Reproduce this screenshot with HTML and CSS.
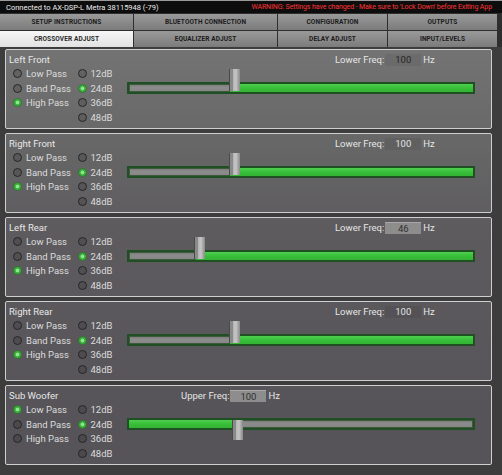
FILE: index.html
```html
<!DOCTYPE html>
<html>
<head>
<meta charset="utf-8">
<link rel="stylesheet" href="styles.css">
</head>
<body>
<div class="app">
  <div class="status">
    <span class="conn">Connected to AX-DSP-L Metra 38115948 (-79)</span>
    <span class="warn">WARNING: Settings have changed - Make sure to 'Lock Down' before Exiting App</span>
  </div>
  <div class="tabs">
    <div class="tab">SETUP INSTRUCTIONS</div>
    <div class="tab">BLUETOOTH CONNECTION</div>
    <div class="tab">CONFIGURATION</div>
    <div class="tab">OUTPUTS</div>
  </div>
  <div class="tabs">
    <div class="tab active">CROSSOVER ADJUST</div>
    <div class="tab">EQUALIZER ADJUST</div>
    <div class="tab">DELAY ADJUST</div>
    <div class="tab">INPUT/LEVELS</div>
  </div>

  <div class="content">
    <section class="panel">
      <div class="head lower">
        <span class="title">Left Front</span>
        <span class="freq"><span class="flabel">Lower Freq:</span><span class="fbox">100</span><span class="hz">Hz</span></span>
      </div>
      <div class="body">
        <div class="group types">
          <div class="opt"><span class="radio"></span>Low Pass</div>
          <div class="opt"><span class="radio"></span>Band Pass</div>
          <div class="opt"><span class="radio on"></span>High Pass</div>
        </div>
        <div class="group slopes">
          <div class="opt"><span class="radio"></span>12dB</div>
          <div class="opt"><span class="radio on"></span>24dB</div>
          <div class="opt"><span class="radio"></span>36dB</div>
          <div class="opt"><span class="radio"></span>48dB</div>
        </div>
        <div class="slider high">
          <div class="track"><div class="seg gray" style="width:29.5%"></div><div class="seg green"></div></div>
          <div class="thumb" style="left:29.5%"></div>
        </div>
      </div>
    </section>

    <section class="panel">
      <div class="head lower">
        <span class="title">Right Front</span>
        <span class="freq"><span class="flabel">Lower Freq:</span><span class="fbox light">100</span><span class="hz">Hz</span></span>
      </div>
      <div class="body">
        <div class="group types">
          <div class="opt"><span class="radio"></span>Low Pass</div>
          <div class="opt"><span class="radio"></span>Band Pass</div>
          <div class="opt"><span class="radio on"></span>High Pass</div>
        </div>
        <div class="group slopes">
          <div class="opt"><span class="radio"></span>12dB</div>
          <div class="opt"><span class="radio on"></span>24dB</div>
          <div class="opt"><span class="radio"></span>36dB</div>
          <div class="opt"><span class="radio"></span>48dB</div>
        </div>
        <div class="slider high">
          <div class="track"><div class="seg gray" style="width:29.5%"></div><div class="seg green"></div></div>
          <div class="thumb" style="left:29.5%"></div>
        </div>
      </div>
    </section>

    <section class="panel">
      <div class="head lower">
        <span class="title">Left Rear</span>
        <span class="freq"><span class="flabel">Lower Freq:</span><span class="fbox lit">46</span><span class="hz">Hz</span></span>
      </div>
      <div class="body">
        <div class="group types">
          <div class="opt"><span class="radio"></span>Low Pass</div>
          <div class="opt"><span class="radio"></span>Band Pass</div>
          <div class="opt"><span class="radio on"></span>High Pass</div>
        </div>
        <div class="group slopes">
          <div class="opt"><span class="radio"></span>12dB</div>
          <div class="opt"><span class="radio on"></span>24dB</div>
          <div class="opt"><span class="radio"></span>36dB</div>
          <div class="opt"><span class="radio"></span>48dB</div>
        </div>
        <div class="slider high">
          <div class="track"><div class="seg gray" style="width:19.5%"></div><div class="seg green"></div></div>
          <div class="thumb" style="left:19.5%"></div>
        </div>
      </div>
    </section>

    <section class="panel">
      <div class="head lower">
        <span class="title">Right Rear</span>
        <span class="freq"><span class="flabel">Lower Freq:</span><span class="fbox light">100</span><span class="hz">Hz</span></span>
      </div>
      <div class="body">
        <div class="group types">
          <div class="opt"><span class="radio"></span>Low Pass</div>
          <div class="opt"><span class="radio"></span>Band Pass</div>
          <div class="opt"><span class="radio on"></span>High Pass</div>
        </div>
        <div class="group slopes">
          <div class="opt"><span class="radio"></span>12dB</div>
          <div class="opt"><span class="radio on"></span>24dB</div>
          <div class="opt"><span class="radio"></span>36dB</div>
          <div class="opt"><span class="radio"></span>48dB</div>
        </div>
        <div class="slider high">
          <div class="track"><div class="seg gray" style="width:29.5%"></div><div class="seg green"></div></div>
          <div class="thumb" style="left:29.5%"></div>
        </div>
      </div>
    </section>

    <section class="panel">
      <div class="head upper">
        <span class="title">Sub Woofer</span>
        <span class="freq"><span class="flabel">Upper Freq:</span><span class="fbox lit">100</span><span class="hz">Hz</span></span>
      </div>
      <div class="body">
        <div class="group types">
          <div class="opt"><span class="radio on"></span>Low Pass</div>
          <div class="opt"><span class="radio"></span>Band Pass</div>
          <div class="opt"><span class="radio"></span>High Pass</div>
        </div>
        <div class="group slopes">
          <div class="opt"><span class="radio"></span>12dB</div>
          <div class="opt"><span class="radio on"></span>24dB</div>
          <div class="opt"><span class="radio"></span>36dB</div>
          <div class="opt"><span class="radio"></span>48dB</div>
        </div>
        <div class="slider low">
          <div class="track"><div class="seg green" style="width:30.5%"></div><div class="seg gray"></div></div>
          <div class="thumb" style="left:30.5%"></div>
        </div>
      </div>
    </section>
  </div>
</div>
</body>
</html>
```
FILE: styles.css
```css
* { box-sizing: border-box; }
html, body {
  margin: 0;
  padding: 0;
  background: #3a3a3a;
}
body {
  width: 502px;
  height: 475px;
  overflow: hidden;
  font-family: Roboto, "Liberation Sans", sans-serif;
}
.app {
  width: 502px;
  height: 475px;
  display: flex;
  flex-direction: column;
  background: #3b3b3b;
}

/* status bar */
.status {
  height: 13px;
  background: #0d0d0d;
  border-top: 1px solid #9a9a9a;
  display: flex;
  align-items: center;
  justify-content: space-between;
  padding: 0 10px 0 6px;
  white-space: nowrap;
}
.conn {
  color: #ececec;
  font-size: 7.5px;
}
.warn {
  color: #ff3434;
  font-size: 7px;
  letter-spacing: -0.1px;
}

/* tabs */
.tabs {
  display: grid;
  grid-template-columns: 133px 143px 109px 109px;
  column-gap: 1px;
  height: 17px;
  padding-top: 1px;
  background: #2e2e2e;
}
.tab {
  display: flex;
  align-items: center;
  justify-content: center;
  background: linear-gradient(#9a9a9a, #7b7b7b);
  color: #1b1b1b;
  font-size: 6.5px;
  font-weight: 700;
  letter-spacing: 0.1px;
  white-space: nowrap;
}
.tab.active {
  background: linear-gradient(#f6f6f6, #e2e2e2);
  color: #2a2a2a;
}

/* content */
.content {
  flex: 1;
  display: flex;
  flex-direction: column;
  gap: 4px;
  padding: 2px 10px 0 5px;
  background: #3d3d3d;
}
.panel {
  height: 80px;
  border: 1px solid #cfcfcf;
  border-radius: 2px;
  background: linear-gradient(#7a7a7a 0px, #6a6a6a 120px, #5d5b5e 230px, #565458 420px) fixed;
  padding: 4px 0 0 0;
  color: #e4e4e4;
}
.head {
  display: grid;
  height: 12px;
  align-items: center;
  font-size: 9.5px;
  line-height: 12px;
  white-space: nowrap;
}
.head.lower { grid-template-columns: 329px auto; }
.head.upper { grid-template-columns: 175px auto; }
.title {
  padding-left: 3px;
  color: #e8e8e8;
}
.freq {
  display: flex;
  align-items: center;
}
.flabel { color: #e6e6e6; }
.fbox {
  width: 36px;
  height: 12px;
  margin-left: 1px;
  margin-right: 2px;
  display: flex;
  align-items: center;
  justify-content: center;
  background: rgba(0,0,0,0.06);
  color: #262626;
}
.fbox.light { color: #e2e2e2; }
.fbox.lit {
  background: #8d8d8d;
  border-top: 1px solid #a8a8a8;
  color: #303030;
}
.hz { color: #e6e6e6; }

.body {
  display: flex;
}
.group {
  display: flex;
  flex-direction: column;
}
.types { width: 71px; padding-left: 7px; }
.slopes { width: 49px; padding-left: 0.5px; }
.opt {
  height: 14.7px;
  display: flex;
  align-items: center;
  gap: 4px;
  font-size: 9.5px;
  color: #dcdcdc;
  white-space: nowrap;
}
.radio {
  flex: 0 0 auto;
  width: 9px;
  height: 9px;
  border-radius: 50%;
  border: 1px solid #262626;
  background: rgba(0,0,0,0.12);
}
.radio.on {
  border-color: #2b7d2b;
  background: radial-gradient(circle, #8ae88a 0 1.6px, #3fae3f 2.2px);
}

/* slider */
.slider {
  position: relative;
  flex: 1;
  margin-right: 16px;
  margin-left: 1px;
  height: 44px;
}
.track {
  margin-top: 16px;
  height: 12px;
  display: flex;
  border: 2px solid #1f4f22;
  background: #1f4f22;
}
.seg.gray {
  background: linear-gradient(#7e7e7e, #8c8c8c 40%, #878787);
  border: 1px solid #3d5a3f;
}
.seg.green {
  flex: 1;
  background: linear-gradient(#4fd04f, #38bf38 50%, #33b333);
}
.slider.low .seg.green { flex: 0 0 auto; }
.slider.low .seg.gray { flex: 1; }
.thumb {
  position: absolute;
  width: 11px;
  margin-left: -1px;
  border-left: 1px solid #4a4a4a;
  background: linear-gradient(90deg, #8a8a8a 0 3px, #b4b4b4 3px, #c6c6c6 60%, #9e9e9e 85%, #8a8a8a);
}
.slider.high .thumb { top: 3px; height: 22px; }
.slider.low .thumb { top: 18px; height: 20px; }
```
